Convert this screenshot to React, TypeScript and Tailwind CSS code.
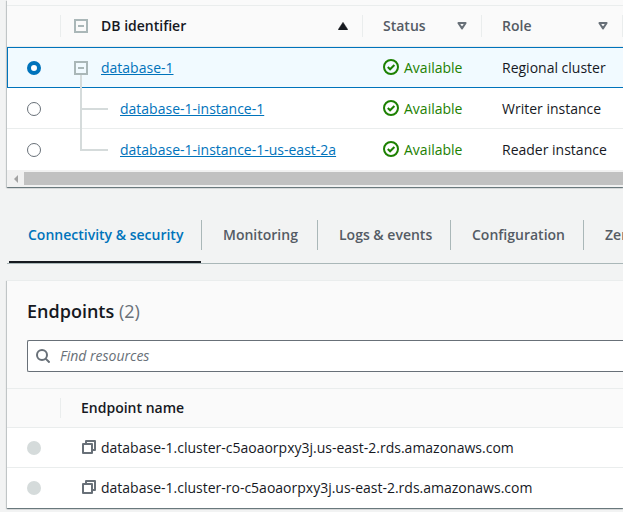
import type { ReactNode } from 'react';

const panel =
  'bg-white shadow-[0_1px_1px_0_rgba(0,28,36,0.4),1px_1px_1px_0_rgba(0,28,36,0.15),-1px_1px_1px_0_rgba(0,28,36,0.15)]';

function Expander({ label }: { label: string }) {
  return (
    <button type="button" aria-label={label} className="block size-[14px] shrink-0">
      <svg viewBox="0 0 14 14" className="block size-[14px]" fill="none" stroke="#aab7b8" strokeWidth="2">
        <path d="M1 1h12v12H1zM4 7h6" />
      </svg>
    </button>
  );
}

function SortIcon({ filled }: { filled?: boolean }) {
  return filled ? (
    <svg viewBox="0 0 10 8" className="block h-2 w-[10px]" fill="#16191f">
      <path d="M5 0.2 9.6 7.2V8H0.4V7.2z" stroke="#16191f" strokeWidth="0.4" />
    </svg>
  ) : (
    <svg viewBox="0 0 10 8" className="block h-2 w-[10px]" fill="none" stroke="#687078" strokeWidth="2">
      <path d="M1.4 1h7.2L5 6.4z" strokeLinejoin="round" />
    </svg>
  );
}

function Status() {
  return (
    <span className="flex items-center gap-[5px] text-[#1d8102]">
      <svg viewBox="0 0 16 16" className="mb-[2px] block size-4" fill="none" stroke="#1d8102" strokeWidth="2">
        <circle cx="8" cy="8" r="7" />
        <path d="m4.8 8 2.3 2.3 4.3-4.3" />
      </svg>
      Available
    </span>
  );
}

function CopyIcon() {
  return (
    <svg viewBox="0 0 14 14" className="block size-[14px]" fill="none" stroke="#687078" strokeWidth="2">
      <path d="M1 4h9v9H1z" strokeLinejoin="round" />
      <path d="M4 4V1h9v9h-3" strokeLinejoin="round" />
    </svg>
  );
}

function Branch({ last }: { last?: boolean }) {
  return (
    <span aria-hidden="true" className="pointer-events-none absolute inset-y-0 left-[19px] w-7">
      <span className={`absolute -top-px left-0 w-[2px] bg-[#d5dbdb] ${last ? 'h-[22px]' : '-bottom-px'}`} />
      <span className="absolute top-[19px] left-0 h-[2px] w-7 bg-[#d5dbdb]" />
    </span>
  );
}

function HeaderCell({ children, divider = true }: { children?: ReactNode; divider?: boolean }) {
  return (
    <th scope="col" className="h-[41px] border-b border-[#eaeded] bg-[#fafafa] p-0 text-left font-semibold">
      <div className={`flex h-[22px] items-center ${divider ? 'border-r border-[#eaeded]' : ''}`}>{children}</div>
    </th>
  );
}

const databases = [
  { id: 'database-1', role: 'Regional cluster', level: 0 },
  { id: 'database-1-instance-1', role: 'Writer instance', level: 1 },
  { id: 'database-1-instance-1-us-east-2a', role: 'Reader instance', level: 1 },
];

const tabs = [
  { label: 'Connectivity & security', width: 'w-[192px]' },
  { label: 'Monitoring', width: 'w-[116px]' },
  { label: 'Logs & events', width: 'w-[133px]' },
  { label: 'Configuration', width: 'w-[133px]' },
  { label: 'Zero-ETL integrations', width: 'w-[192px]' },
];

const endpoints = [
  'database-1.cluster-c5aoaorpxy3j.us-east-2.rds.amazonaws.com',
  'database-1.cluster-ro-c5aoaorpxy3j.us-east-2.rds.amazonaws.com',
];

const radio = 'm-0 block size-[14px] appearance-none rounded-full';

export default function App() {
  return (
    <main className="min-h-screen overflow-hidden bg-[#f2f3f3] pl-[7px] font-['Open_Sans','Noto_Sans',sans-serif] text-sm text-[#16191f]">
      <section className={panel} aria-label="Databases">
        <div className="h-[6px] border-b border-[#eaeded] bg-[#fafafa]" />
        <div className="overflow-hidden">
          <table className="w-full min-w-[760px] table-fixed border-separate border-spacing-0">
            <colgroup>
              <col className="w-[54px]" />
              <col className="w-[302px]" />
              <col className="w-[119px]" />
              <col className="w-[141px]" />
              <col />
            </colgroup>
            <thead>
              <tr>
                <HeaderCell />
                <HeaderCell>
                  <div className="flex w-full items-center gap-[13px] pr-[14px] pl-[13px]">
                    <Expander label="Collapse all" />
                    <span className="grow">DB identifier</span>
                    <SortIcon filled />
                  </div>
                </HeaderCell>
                <HeaderCell>
                  <div className="flex w-full items-center justify-between pr-[14px] pl-5 text-[#545b64]">
                    Status
                    <SortIcon />
                  </div>
                </HeaderCell>
                <HeaderCell>
                  <div className="flex w-full items-center justify-between pr-[14px] pl-5 text-[#545b64]">
                    Role
                    <SortIcon />
                  </div>
                </HeaderCell>
                <HeaderCell divider={false} />
              </tr>
            </thead>
            <tbody>
              {databases.map((db, i) => {
                const cell =
                  i === 0
                    ? 'h-[41px] border-y border-[#0073bb] bg-[#f1faff] p-0'
                    : i === 1
                      ? 'h-[41px] border-y border-t-transparent border-b-[#eaeded] p-0'
                      : 'h-[41px] border-y border-transparent p-0';
                return (
                  <tr key={db.id}>
                    <td className={`${cell} ${i === 0 ? 'border-l pl-[19px]' : 'pl-5'}`}>
                      <input
                        type="radio"
                        name="database"
                        aria-label={db.id}
                        defaultChecked={i === 0}
                        className={`${radio} border border-[#687078] bg-white checked:border-4 checked:border-[#0073bb]`}
                      />
                    </td>
                    <td className={`relative ${cell}`}>
                      {db.level === 0 ? (
                        <div className="flex items-center gap-[13px] pl-[13px]">
                          <Expander label="Collapse database-1" />
                          <span aria-hidden="true" className="absolute top-[27px] -bottom-px left-[19px] w-[2px] bg-[#d5dbdb]" />
                          <a href="#database" className="text-[#0073bb] underline">{db.id}</a>
                        </div>
                      ) : (
                        <div className="pl-[59px]">
                          <Branch last={i === 2} />
                          <a href="#instance" className="text-[#0073bb] underline">{db.id}</a>
                        </div>
                      )}
                    </td>
                    <td className={cell}>
                      <div className="pl-5"><Status /></div>
                    </td>
                    <td className={cell}>
                      <div className="pl-5">{db.role}</div>
                    </td>
                    <td className={cell} />
                  </tr>
                );
              })}
            </tbody>
          </table>
        </div>
        <div aria-hidden="true" className="flex h-[17px] items-center overflow-hidden bg-[#f1f1f1]">
          <span className="flex w-[17px] shrink-0 justify-center">
            <svg viewBox="0 0 4 8" className="block h-2 w-1" fill="#a3a3a3"><path d="M4 0v8L0 4z" /></svg>
          </span>
          <span className="h-[13px] grow bg-[#c1c1c1]" />
        </div>
      </section>

      <nav aria-label="Details" className="mt-[33px] flex h-11 overflow-hidden border-b border-[#aab7b8] pl-[2px]">
        {tabs.map((tab, i) => (
          <a
            key={tab.label}
            href="#details"
            aria-current={i === 0 ? 'page' : undefined}
            className={`h-[43px] shrink-0 font-semibold whitespace-nowrap ${tab.width} ${
              i === 0 ? 'border-b-2 border-[#16191f] text-[#0073bb]' : 'text-[#545b64]'
            }`}
          >
            <span
              className={`flex h-[30px] items-center ${
                i === 0 ? 'pl-[19px]' : 'border-l border-[#aab7b8] pl-[21px]'
              }`}
            >
              {tab.label}
            </span>
          </a>
        ))}
      </nav>

      <section className={`mt-4 border-t border-[#eaeded] ${panel}`}>
        <header className="border-b border-[#eaeded] bg-[#fafafa] pt-[17px] pb-4 pl-5">
          <h2 className="text-lg leading-[26px] font-semibold">
            Endpoints <span className="font-normal text-[#687078]">(2)</span>
          </h2>
          <label className="mt-4 flex h-8 items-center gap-[10px] rounded-l-[2px] border border-r-0 border-[#687078] bg-white pl-2">
            <svg viewBox="0 0 14 14" className="block size-[14px]" fill="none" stroke="#687078" strokeWidth="2">
              <circle cx="6" cy="6" r="5" />
              <path d="m9.6 9.6 4 4" />
            </svg>
            <input
              type="search"
              aria-label="Find resources"
              placeholder="Find resources"
              className="min-w-0 grow bg-transparent italic outline-none placeholder:text-[#687078]"
            />
          </label>
        </header>
        <table className="w-full table-fixed border-separate border-spacing-0">
          <colgroup>
            <col className="w-[54px]" />
            <col />
          </colgroup>
          <thead>
            <tr>
              <th className="h-[39px] border-b border-[#eaeded] bg-[#fafafa] p-0">
                <div className="h-5 border-r border-[#eaeded]" />
              </th>
              <th scope="col" className="h-[39px] border-b border-[#eaeded] bg-[#fafafa] p-0 pl-5 text-left font-semibold">
                Endpoint name
              </th>
            </tr>
          </thead>
          <tbody>
            {endpoints.map((endpoint, i) => {
              const cell = i === 0 ? 'h-10 border-b border-[#eaeded] p-0' : 'h-10 p-0';
              return (
                <tr key={endpoint}>
                  <td className={`${cell} pl-5`}>
                    <input type="radio" name="endpoint" disabled aria-label={endpoint} className={`${radio} bg-[#d5dbdb]`} />
                  </td>
                  <td className={cell}>
                    <div className="flex items-center gap-[5px] pl-[21px] whitespace-nowrap">
                      <button type="button" aria-label="Copy endpoint" className="mb-[2px]">
                        <CopyIcon />
                      </button>
                      {endpoint}
                    </div>
                  </td>
                </tr>
              );
            })}
          </tbody>
        </table>
      </section>
    </main>
  );
}
